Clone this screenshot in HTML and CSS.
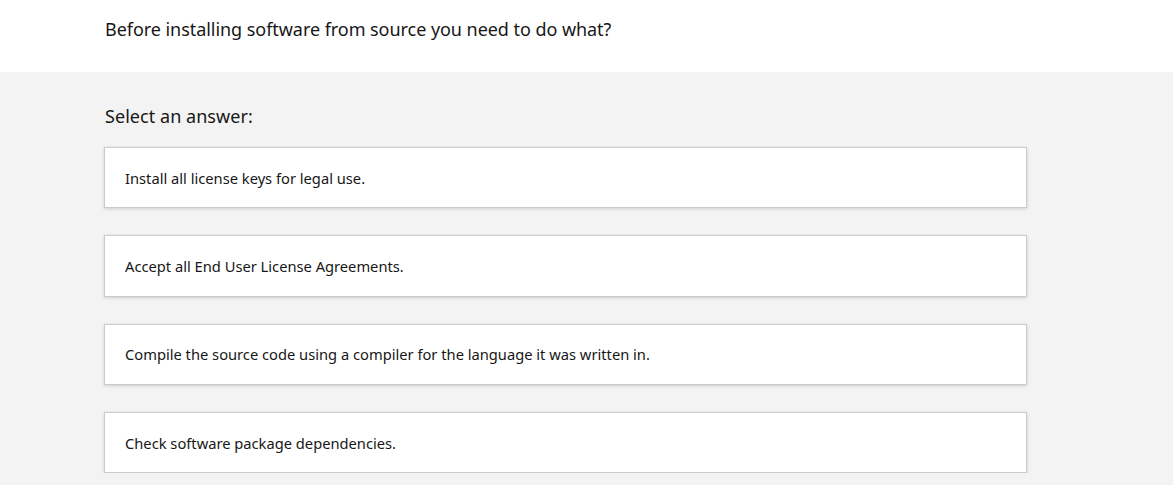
FILE: index.html
```html
<!DOCTYPE html>
<html>
<head>
<meta charset="utf-8">
<link rel="stylesheet" href="styles.css">
</head>
<body>
<header class="question">
  <div class="wrap">
    <h1 class="question-text">Before installing software from source you need to do what?</h1>
  </div>
</header>
<main class="answers">
  <div class="wrap">
    <h2 class="prompt">Select an answer:</h2>
    <ul class="options">
      <li class="option">Install all license keys for legal use.</li>
      <li class="option">Accept all End User License Agreements.</li>
      <li class="option">Compile the source code using a compiler for the language it was written in.</li>
      <li class="option">Check software package dependencies.</li>
    </ul>
  </div>
</main>
</body>
</html>
```
FILE: styles.css
```css
html, body {
  margin: 0;
  padding: 0;
}
body {
  font-family: "Noto Sans", "Open Sans", sans-serif;
  color: #171717;
  background: #f3f3f3;
}
.wrap {
  width: 923px;
  margin-left: 104px;
}
.question {
  background: #fff;
  height: 72px;
}
.question-text {
  margin: 0;
  padding: 16px 0 0 1px;
  font-size: 18px;
  font-weight: 400;
  line-height: 26px;
  letter-spacing: -0.05px;
}
.answers .wrap {
  padding-top: 31px;
}
.prompt {
  margin: 0 0 18px 1px;
  font-size: 18px;
  font-weight: 400;
  line-height: 26px;
  letter-spacing: 0.05px;
}
.options {
  list-style: none;
  margin: 0;
  padding: 0;
  display: flex;
  flex-direction: column;
  gap: 27px;
}
.option {
  box-sizing: border-box;
  height: 61.33px;
  background: #fff;
  border: 1px solid #cbcbcb;
  box-shadow: 0 1px 3px rgba(0,0,0,0.16);
  display: flex;
  align-items: center;
  padding: 0 20px 0;
  font-size: 14.7px;
}
```
